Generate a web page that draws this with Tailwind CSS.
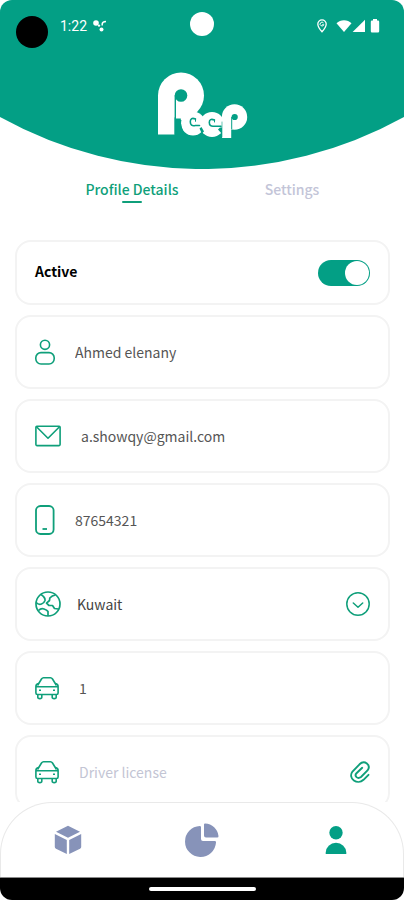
<!DOCTYPE html>
<html lang="en">
<head>
<meta charset="utf-8">
<meta name="viewport" content="width=device-width, initial-scale=1">
<title>Peep – Profile</title>
<script src="https://cdn.jsdelivr.net/npm/@tailwindcss/browser@4"></script>
</head>
<body class="bg-white">
<div class="flex h-screen flex-col overflow-hidden bg-white font-['Noto_Sans_CJK_SC','Noto_Sans',sans-serif] text-sm text-[#555555]">

  <header class="relative h-[169px] shrink-0 overflow-hidden rounded-t-xl">
    <svg class="absolute inset-0 h-full w-full" viewBox="0 0 404 169" preserveAspectRatio="none" aria-hidden="true">
      <path fill="#039f85" d="M0 0H404V117A418 418 0 0 1 0 117Z"/>
    </svg>
    <span class="absolute top-4 left-4 size-8 rounded-full bg-black"></span>
    <span class="absolute top-3 left-1/2 size-6 -translate-x-1/2 rounded-full bg-white"></span>

    <div class="relative flex items-center justify-between pt-4 pr-6 pl-15 text-white">
      <div class="flex items-center gap-1.5">
        <span class="font-[Roboto,sans-serif] text-sm leading-5">1:22</span>
        <svg class="h-3 w-3.5" viewBox="0 0 14 12" aria-hidden="true">
          <circle cx="3" cy="3" r="2.800" fill="#fff"/>
          <circle cx="8.500" cy="9.400" r="2" fill="#fff"/>
          <circle cx="6" cy="5.600" r="1.200" fill="#fff"/>
          <path d="M9.200 5.500V4Q9.200 1.800 13 1.500" fill="none" stroke="#fff" stroke-width="1.500"/>
        </svg>
      </div>
      <div class="flex items-center">
        <svg class="mr-2 h-3.5 w-3" viewBox="0 0 12 14" aria-hidden="true">
          <path d="M6 .9A4.200 4.200 0 0 0 1.800 5.100C1.800 8.300 6 12.800 6 12.800S10.200 8.300 10.200 5.100A4.200 4.200 0 0 0 6 .9Z" fill="none" stroke="#fff" stroke-width="1.300"/>
          <path d="M7.500 3.900A1.900 1.900 0 1 0 7.800 5.700H6.200" fill="none" stroke="#fff"/>
        </svg>
        <svg class="h-3.5 w-4" viewBox="0 0 16 14" aria-hidden="true">
          <path d="M8 13 .5 4.300Q3.600 1.200 8 1.200T15.500 4.300Z" fill="#fff"/>
        </svg>
        <svg class="mr-1 h-3.5 w-3.5" viewBox="0 0 14 14" aria-hidden="true">
          <path d="M13 .8V13H.6Z" fill="#fff"/>
        </svg>
        <svg class="h-3.5 w-2.5" viewBox="0 0 10 14" aria-hidden="true">
          <path d="M3 0H7V1.500H8Q9.200 1.500 9.200 2.700V12.300Q9.200 13.500 8 13.500H2Q.8 13.500 .8 12.300V2.700Q.8 1.500 2 1.500H3Z" fill="#fff"/>
        </svg>
      </div>
    </div>

    <svg class="relative mx-auto mt-9 h-[68px] w-[92px]" viewBox="156 72 92 68" role="img" aria-label="Peep">
      <g fill="#fff">
        <circle cx="181" cy="95.500" r="23"/>
        <rect x="158" y="95" width="16.500" height="39.500"/>
        <rect x="176" y="98" width="18" height="22"/>
        <circle cx="193" cy="123.500" r="12"/>
        <circle cx="212" cy="124.500" r="12.500"/>
        <circle cx="234.500" cy="117" r="12.700"/>
        <rect x="222" y="117" width="9.200" height="21"/>
      </g>
      <g fill="#039f85">
        <circle cx="181" cy="95.500" r="6.300"/>
        <rect x="174.600" y="95.500" width="1.400" height="23"/>
        <path d="M174.600 118.500H180.800Q180.500 127 185 134.500H174.600Z"/>
        <circle cx="234.700" cy="117" r="3.100"/>
        <rect x="231.200" y="117" width="1" height="12"/>
        <path d="M199.500 128.500 201.500 127 204 131.500 201.800 133.500Z"/>
        <path d="M218 129.500 220 127.500H222V134Z"/>
      </g>
      <g fill="none" stroke="#039f85" stroke-width="1.600" stroke-linecap="round">
        <path d="M195.500 119Q190.300 117 190.300 121.800T195.300 125.500L199.500 125.500"/>
        <path d="M214.500 120Q209.300 118 209.300 122.500T214.300 126.200L221 126.200"/>
        <path d="M195.500 119V121.300M214.500 120V122" stroke-width="1"/>
        <path d="M222 122V137" stroke-width=".6"/>
      </g>
    </svg>
  </header>

  <nav class="grid shrink-0 grid-cols-2 pt-2.5 pr-8 pb-4 pl-13 leading-5 font-medium" aria-label="Profile sections">
    <button class="flex flex-col items-center text-[#0f9f7a]">Profile Details<span class="mt-0.5 h-0.5 w-5 rounded-full bg-[#0f9f7a]"></span></button>
    <button class="flex flex-col items-center text-[#c3c5d8]">Settings</button>
  </nav>

  <main class="flex min-h-0 flex-1 flex-col gap-2.5 overflow-y-auto pt-[21px] pr-3.5 pl-[15px] [scrollbar-width:none]">
    <label class="flex h-[65px] shrink-0 items-center justify-between rounded-2xl border-2 border-[#f3f3f3] px-[18px] font-bold text-black">
      <span class="pb-1">Active</span>
      <input type="checkbox" checked class="h-[26px] w-[52px] appearance-none rounded-full bg-[#a9b0c4] p-px before:block before:size-6 before:rounded-full before:bg-white checked:bg-[#039f85] checked:before:translate-x-[26px]">
    </label>

    <label class="flex h-[74px] shrink-0 items-center gap-5 rounded-2xl border-2 border-[#f3f3f3] px-[18px]">
      <svg class="h-[26px] w-5 shrink-0" viewBox="0 0 20 26" fill="none" stroke="#0f9f7a" stroke-width="1.600" aria-hidden="true">
        <circle cx="10" cy="5.800" r="4.600"/>
        <rect x=".8" y="13.600" width="18.400" height="11.400" rx="5.200"/>
      </svg>
      <input type="text" aria-label="Name" value="Ahmed elenany" class="min-w-0 flex-1 outline-none">
    </label>

    <label class="flex h-[74px] shrink-0 items-center gap-5 rounded-2xl border-2 border-[#f3f3f3] px-[18px]">
      <svg class="h-[22px] w-[26px] shrink-0" viewBox="0 0 26 22" fill="none" stroke="#0f9f7a" stroke-width="1.600" stroke-linejoin="round" aria-hidden="true">
        <rect x=".9" y="1.200" width="24.200" height="19.400" rx="1"/>
        <path d="M1.500 1.800 13 13.200 24.500 1.800"/>
      </svg>
      <input type="email" aria-label="Email" value="a.showqy@gmail.com" class="min-w-0 flex-1 outline-none">
    </label>

    <label class="flex h-[74px] shrink-0 items-center gap-5 rounded-2xl border-2 border-[#f3f3f3] px-[18px]">
      <svg class="h-[30px] w-5 shrink-0" viewBox="0 0 20 30" fill="none" stroke="#0f9f7a" stroke-width="1.800" aria-hidden="true">
        <rect x="1" y="1" width="17.600" height="28" rx="4.500"/>
        <path d="M7.500 24H12"/>
      </svg>
      <input type="tel" aria-label="Phone" value="87654321" class="min-w-0 flex-1 outline-none">
    </label>

    <label class="flex h-[74px] shrink-0 items-center gap-4 rounded-2xl border-2 border-[#f3f3f3] px-[18px]">
      <svg class="size-[26px] shrink-0" viewBox="0 0 26 26" fill="none" stroke="#0f9f7a" stroke-width="1.700" stroke-linejoin="round" aria-hidden="true">
        <circle cx="13" cy="13" r="12"/>
        <path d="M1.200 11.500Q3.500 14 6.500 13Q9 12.200 10 9.500Q10.500 6.500 6 3.500"/>
        <path d="M20.500 4Q17 4.500 14.800 7L14.500 9.500 11.500 12.200 14 14.500 17.500 14.500 19.500 17.500 23.500 18"/>
        <path d="M3.500 19.500Q6 17 9 18T13 20.500V25"/>
      </svg>
      <select aria-label="Country" class="min-w-0 flex-1 appearance-none text-[#444444] outline-none">
        <option>Kuwait</option>
      </select>
      <svg class="size-6 shrink-0" viewBox="0 0 24 24" fill="none" stroke="#0f9f7a" stroke-width="1.500" stroke-linecap="round" stroke-linejoin="round" aria-hidden="true">
        <circle cx="12" cy="12" r="11.200"/>
        <path d="M7.300 11 12 15.200 16.700 11"/>
      </svg>
    </label>

    <label class="flex h-[74px] shrink-0 items-center gap-5 rounded-2xl border-2 border-[#f3f3f3] px-[18px]">
      <svg class="size-6 shrink-0" viewBox="0 0 24 24" fill="none" stroke="#0f9f7a" stroke-width="1.600" stroke-linejoin="round" aria-hidden="true">
        <path d="M2.500 9.500 6.500 3Q7.300 1.800 8.500 1.800H15.500Q16.700 1.800 17.500 3L21.500 9.500"/>
        <path d="M3.500 7.500Q.9 7.800 .9 10.500V17Q.9 18.500 2.500 18.500H21.500Q23.100 18.500 23.100 17V10.500Q23.100 7.800 20.500 7.500M1.200 10.800H22.800"/>
        <path d="M2.800 18.500V21.300Q2.800 22.600 4.800 22.600T6.800 21.300V18.500M17.200 18.500V21.300Q17.200 22.600 19.200 22.600T21.200 21.300V18.500M4 14.300H6M18 14.300H20"/>
      </svg>
      <input type="text" aria-label="Vehicle" value="1" class="min-w-0 flex-1 outline-none">
    </label>

    <div class="flex h-[74px] shrink-0 items-center gap-5 rounded-2xl border-2 border-[#f3f3f3] px-[18px]">
      <svg class="size-6 shrink-0" viewBox="0 0 24 24" fill="none" stroke="#0f9f7a" stroke-width="1.600" stroke-linejoin="round" aria-hidden="true">
        <path d="M2.500 9.500 6.500 3Q7.300 1.800 8.500 1.800H15.500Q16.700 1.800 17.500 3L21.500 9.500"/>
        <path d="M3.500 7.500Q.9 7.800 .9 10.500V17Q.9 18.500 2.500 18.500H21.500Q23.100 18.500 23.100 17V10.500Q23.100 7.800 20.500 7.500M1.200 10.800H22.800"/>
        <path d="M2.800 18.500V21.300Q2.800 22.600 4.800 22.600T6.800 21.300V18.500M17.200 18.500V21.300Q17.200 22.600 19.200 22.600T21.200 21.300V18.500M4 14.300H6M18 14.300H20"/>
      </svg>
      <input type="text" readonly aria-label="Driver license" placeholder="Driver license" class="min-w-0 flex-1 outline-none placeholder:text-[#c3c5d4]">
      <button aria-label="Attach driver license">
        <svg class="h-[22px] w-5" viewBox="0 0 20 22" fill="none" stroke="#0f9f7a" stroke-width="1.900" stroke-linecap="round" aria-hidden="true">
          <path d="M18.500 13.800 13.500 18.800C7.500 24.500-2.500 17.500 2.500 10.500L9.500 3.300C14.500-1.500 21.500 4 17.500 9.500L11 16C7.500 18.500 4 15 6.500 12.200L12.200 6.800"/>
        </svg>
      </button>
    </div>
  </main>

  <nav class="grid h-[75px] shrink-0 grid-cols-3 items-center rounded-t-[52px] border border-b-0 border-[#e9e9e9] bg-white" aria-label="Main">
    <a href="#orders" aria-label="Orders" class="flex justify-center">
      <svg class="h-[30px] w-7" viewBox="0 0 28 30" fill="#8793b9" aria-hidden="true">
        <path d="M14 .8 26 6.800 14 12.800 2 6.800Z"/>
        <path d="M.8 9 12.800 15V29L2 23.800Q.8 23.200 .8 22Z"/>
        <path d="M27.200 9 15.200 15V29L26 23.800Q27.200 23.200 27.200 22Z"/>
      </svg>
    </a>
    <a href="#reports" aria-label="Reports" class="flex justify-center">
      <svg class="size-[34px]" viewBox="0 0 34 34" fill="#8793b9" aria-hidden="true">
        <path d="M16 4.200Q16 3 14.800 3A15.500 15.500 0 1 0 31 19.500Q31.200 18 29.800 18H18Q16 18 16 16Z"/>
        <path d="M19 1.500Q19 .4 20.200 .5A14 14 0 0 1 33.500 13Q33.700 14.500 32.200 14.500H21Q19 14.500 19 12.500Z"/>
      </svg>
    </a>
    <a href="#profile" aria-label="Profile" class="flex justify-center">
      <svg class="h-[30px] w-[22px]" viewBox="0 0 22 30" fill="#039f85" aria-hidden="true">
        <circle cx="11" cy="7.700" r="6.700"/>
        <path d="M.7 29V27.500A10.300 9.700 0 0 1 21.300 27.500V29Z"/>
      </svg>
    </a>
  </nav>

  <footer class="flex h-[23px] shrink-0 items-center justify-center rounded-b-xl border-t border-[#8a8a8a] bg-black">
    <span class="h-1 w-[107px] rounded-full bg-white"></span>
  </footer>
</div>
</body>
</html>
